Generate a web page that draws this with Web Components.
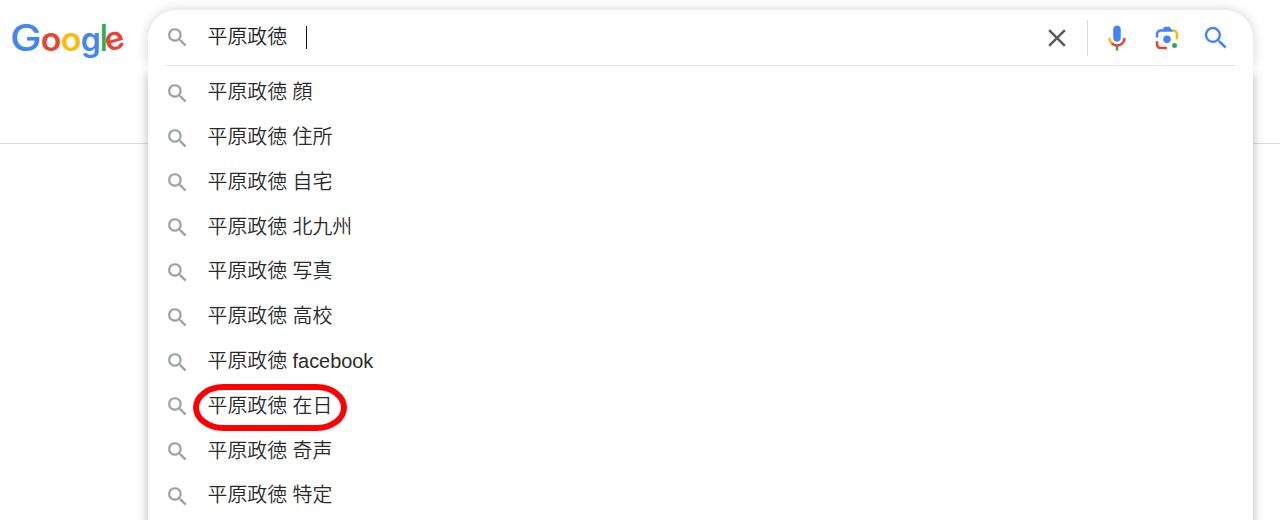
<!DOCTYPE html>
<html lang="ja">
<head>
<meta charset="utf-8">
<title>平原政徳 - Google</title>
<style>
  body {
    margin: 0;
    background: #fff;
    font-family: "Liberation Sans", "Noto Sans CJK JP", sans-serif;
  }
</style>
</head>
<body>
<search-page>
  <google-logo slot="logo"></google-logo>
  <search-bar slot="bar">平原政徳</search-bar>
  <suggest-item>平原政徳 顔</suggest-item>
  <suggest-item>平原政徳 住所</suggest-item>
  <suggest-item>平原政徳 自宅</suggest-item>
  <suggest-item>平原政徳 北九州</suggest-item>
  <suggest-item>平原政徳 写真</suggest-item>
  <suggest-item>平原政徳 高校</suggest-item>
  <suggest-item>平原政徳 facebook</suggest-item>
  <suggest-item marked>平原政徳 在日</suggest-item>
  <suggest-item>平原政徳 奇声</suggest-item>
  <suggest-item>平原政徳 特定</suggest-item>
</search-page>

<script>
const ICONS = {
  search: `<path fill="currentColor" d="M15.5 14h-.79l-.28-.27A6.471 6.471 0 0 0 16 9.5 6.5 6.5 0 1 0 9.5 16c1.61 0 3.09-.59 4.23-1.57l.27.28v.79l5 4.99L20.49 19l-4.99-5zm-6 0C7.01 14 5 11.99 5 9.5S7.01 5 9.5 5 14 7.01 14 9.5 11.99 14 9.5 14z"/>`,
  close: `<path fill="currentColor" d="M19 6.41L17.59 5 12 10.59 6.41 5 5 6.41 10.59 12 5 17.59 6.41 19 12 13.41 17.59 19 19 17.59 13.41 12z"/>`,
  mic: `<path fill="#4285f4" d="m12 15c1.66 0 3-1.31 3-2.97v-7.02c0-1.66-1.34-3.01-3-3.01s-3 1.34-3 3.01v7.02c0 1.66 1.34 2.97 3 2.97z"/>
    <path fill="#34a853" d="m11 18.08h2v3.92h-2z"/>
    <path fill="#fbbc04" d="m7.05 16.87c-1.27-1.33-2.05-2.83-2.05-4.87h2c0 1.45.56 2.42 1.47 3.38v.32l-1.15 1.18z"/>
    <path fill="#ea4335" d="m12 16.93a4.97 5.25 0 0 1-3.54-1.55l-1.41 1.49c1.26 1.34 3.02 2.13 4.95 2.13 3.87 0 6.99-2.92 6.99-7h-1.99c0 2.92-2.24 4.93-5 4.93z"/>`,
  lens: `<g transform="scale(.125)">
    <circle fill="#34a853" cx="144.07" cy="144" r="16"/>
    <circle fill="#4285f4" cx="96.07" cy="104" r="24"/>
    <path fill="#ea4335" d="M24 135.2c0 18.11 14.69 32.8 32.8 32.8H96v-16l-40.1-.1c-8.8 0-15.9-8.19-15.9-17.9v-18H24z"/>
    <path fill="#fbbc04" d="M168 72.8c0-18.11-14.69-32.8-32.8-32.8H116l20 16c8.8 0 16 8.29 16 18v30h16z"/>
    <path fill="#4285f4" d="M112 24H80L68 40H56.8C38.69 40 24 54.69 24 72.8V92h16V74c0-9.71 7.2-18 16-18h80l-12-16z"/>
    </g>`
};

class UiIcon extends HTMLElement {
  constructor() {
    super();
    this.attachShadow({ mode: "open" }).innerHTML = `
    <style>
    :host {
      display: block;
      flex: none;
      width: var(--size, 30px);
      height: var(--size, 30px);
    }
    svg { display: block; width: 100%; height: 100%; }
    path { stroke: currentColor; stroke-width: var(--bold, 0); }
    </style>
    <svg viewBox="0 0 24 24" aria-hidden="true">${ICONS[this.getAttribute("name")]}</svg>`;
  }
}

class GoogleLogo extends HTMLElement {
  constructor() {
    super();
    this.attachShadow({ mode: "open" }).innerHTML = `
    <style>
    :host { display: block; }
    svg { display: block; overflow: visible; }
    text { font-family: Inter, sans-serif; font-size: 32px; font-weight: 600; }
    .b { fill: #4285f4; }
    .r { fill: #ea4335; }
    .y { fill: #fbbc05; }
    .g { fill: #34a853; }
    .cap { font-size: 37px; font-weight: 500; }
    .tall { font-size: 36px; }
    </style>
    <svg width="148" height="70">
      <text class="b cap" transform="translate(10 50.6) scale(1.14 1)">G</text>
      <text class="r" transform="translate(40.8 50.8) scale(1.06 1.02)">o</text>
      <text class="y" transform="translate(60.8 50.8) scale(1.06 1.02)">o</text>
      <text class="b" transform="translate(80.8 50.8) scale(1 1.02)">g</text>
      <text class="g tall" transform="translate(99.9 50.8) scale(.8 1.02)">l</text>
      <text class="r" transform="translate(107.6 52) rotate(-16) scale(1.04 1)">e</text>
    </svg>`;
  }
}

class SearchBar extends HTMLElement {
  constructor() {
    super();
    this.attachShadow({ mode: "open" }).innerHTML = `
    <style>
    :host {
      display: flex;
      align-items: center;
      box-sizing: border-box;
      height: 56px;
      margin-inline: 17px;
      border-bottom: 1px solid #e4e5e7;
      color: #202124;
      font-size: 19.9px;
      font-weight: 350;
    }
    .glass { --size: 25px; --bold: .15; color: #9aa0a6; margin: -1px 0 0 -.5px; }
    .field {
      flex: 1;
      display: flex;
      align-items: center;
      padding-left: 18px;
      line-height: 24px;
      margin-top: -1px;
    }
    .caret { width: 1px; height: 23px; margin-left: 19px; background: #111; }
    .close { color: #58595b; }
    .rule { width: 1px; height: 36px; margin-inline: 15px 14px; background: #dadce0; }
    .tools { display: flex; gap: 19.4px; padding-right: 5px; color: #4285f4; }
    .close, .tools { margin-top: 1px; }
    </style>
    <ui-icon class="glass" name="search"></ui-icon>
    <div class="field"><slot></slot><span class="caret"></span></div>
    <ui-icon class="close" name="close"></ui-icon>
    <span class="rule"></span>
    <div class="tools">
      <ui-icon name="mic"></ui-icon>
      <ui-icon name="lens"></ui-icon>
      <ui-icon name="search"></ui-icon>
    </div>`;
  }
}

class SuggestItem extends HTMLElement {
  constructor() {
    super();
    this.attachShadow({ mode: "open" }).innerHTML = `
    <style>
    :host {
      display: flex;
      align-items: center;
      height: 44.8px;
      padding-left: 16.5px;
      color: #2a2a2a;
      font-size: 19.9px;
      font-weight: 350;
      line-height: 27px;
    }
    ui-icon { --size: 25px; --bold: .15; color: #9aa0a6; margin-top: 1px; }
    .text { position: relative; margin-left: 18px; white-space: nowrap; }
    /* red ring drawn round a marked suggestion */
    :host([marked]) .text::after {
      content: "";
      position: absolute;
      inset: -9px -15px -11px -15px;
      border: 6px solid #fe0000;
      border-radius: 31px / 24px;
    }
    </style>
    <ui-icon name="search"></ui-icon>
    <span class="text"><slot></slot></span>`;
  }
}

class SearchPage extends HTMLElement {
  constructor() {
    super();
    this.attachShadow({ mode: "open" }).innerHTML = `
    <style>
    :host {
      display: grid;
      grid-template-columns: 148px 1105px 1fr;
      height: 520px;
      overflow: hidden;
      background: linear-gradient(#dadce0, #dadce0) 0 143px / 100% 1px no-repeat;
    }
    .box { display: flex; flex-direction: column; padding-top: 10px; }
    .top {
      border-radius: 28px 28px 0 0;
      background: #fff;
      box-shadow: 0 0 12px rgba(32, 33, 36, .2);
      clip-path: inset(-10px -20px 0 -20px);
    }
    .list {
      flex: 1;
      min-height: 470px;
      padding-top: 4.4px;
      background: #fff;
      box-shadow: 0 6px 10px rgba(32, 33, 36, .32);
    }
    </style>
    <slot name="logo"></slot>
    <div class="box">
      <div class="top"><slot name="bar"></slot></div>
      <div class="list"><slot></slot></div>
    </div>`;
  }
}

customElements.define("ui-icon", UiIcon);
customElements.define("google-logo", GoogleLogo);
customElements.define("search-bar", SearchBar);
customElements.define("suggest-item", SuggestItem);
customElements.define("search-page", SearchPage);
</script>
</body>
</html>
